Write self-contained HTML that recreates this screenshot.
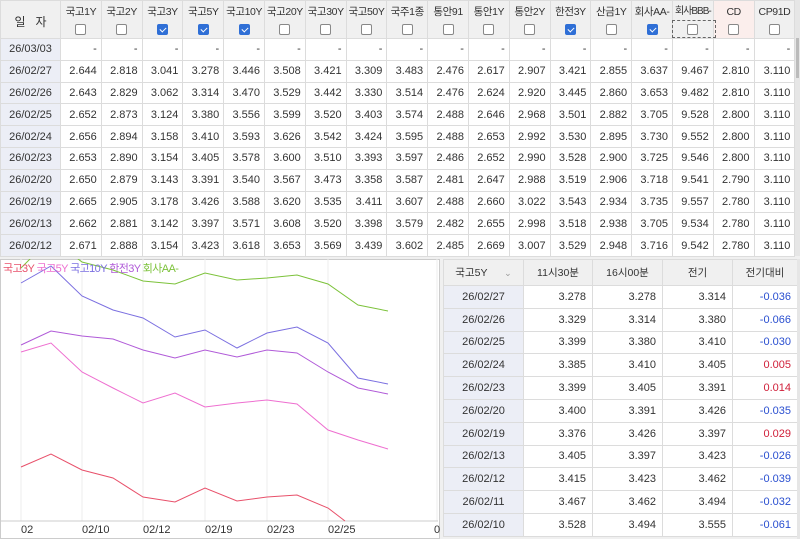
<!DOCTYPE html>
<html><head><meta charset="utf-8"><style>
*{box-sizing:border-box;margin:0;padding:0}
body{width:800px;height:539px;overflow:hidden;background:#f0f0f0;font-family:"Liberation Sans","Noto Sans CJK KR",sans-serif;font-size:11px;color:#333;position:relative}
table{border-collapse:collapse;table-layout:fixed;position:absolute}
td,th{border:1px solid #dcdcdc;overflow:hidden;white-space:nowrap;font-weight:normal}
#t1{left:0;top:0;width:795px}
#t1 th{background:#f0f0f0;height:38px;vertical-align:top;padding-top:4px;font-size:10.5px;letter-spacing:-0.4px;color:#333}
#t1 th b{display:block;font-weight:normal;white-space:nowrap;height:14px;line-height:14px}
#t1 td{height:21.8px;background:#fff;text-align:right;padding-right:4px;font-size:11px;color:#333}
#t1 td.d{background:#eceef6;text-align:center;padding:0}
.cb{display:block;margin:5px auto 0;width:11px;height:11px;border:1px solid #888;border-radius:2px;background:#fff}
.cb.on{background:#2f6fd6;border-color:#2f6fd6;position:relative}
.cb.on:after{content:"";position:absolute;left:3px;top:1px;width:3px;height:5px;border:solid #fff;border-width:0 1.5px 1.5px 0;transform:rotate(45deg)}
#t2{left:443px;top:259px;width:354px}
#t2 th{background:#f0f0f0;height:26px;font-size:10.5px}
#t2 td{height:22.8px;background:#fff;text-align:right;padding-right:6px;font-size:11px}
#t2 td.d{background:#eceef6;text-align:center;padding:0}
.b{color:#2a4fd0}.r{color:#d0203a}
#chart{position:absolute;left:0;top:259px;width:440px;height:280px;background:#fff;border:1px solid #ccc}
</style></head><body>
<table id="t1"><colgroup><col style="width:60px"><col span="18" style="width:40.8px"></colgroup>
<tr><th style="padding-top:12px;font-size:12px;letter-spacing:0">일&nbsp;&nbsp;&nbsp;자</th>
<th><b>국고1Y</b><i class="cb"></i></th><th><b>국고2Y</b><i class="cb"></i></th><th><b>국고3Y</b><i class="cb on"></i></th><th><b>국고5Y</b><i class="cb on"></i></th><th><b>국고10Y</b><i class="cb on"></i></th><th><b>국고20Y</b><i class="cb"></i></th><th><b>국고30Y</b><i class="cb"></i></th><th><b>국고50Y</b><i class="cb"></i></th><th><b>국주1종</b><i class="cb"></i></th><th><b>통안91</b><i class="cb"></i></th><th><b>통안1Y</b><i class="cb"></i></th><th><b>통안2Y</b><i class="cb"></i></th><th><b>한전3Y</b><i class="cb on"></i></th><th><b>산금1Y</b><i class="cb"></i></th><th><b>회사AA-</b><i class="cb on"></i></th><th style="padding-left:0;padding-right:0"><b style="letter-spacing:-1px;font-size:10px;overflow:visible;margin-left:-2px;margin-right:-2px">회사BBB-</b><i class="cb"></i></th><th style="background:#fbeeec"><b>CD</b><i class="cb"></i></th><th><b>CP91D</b><i class="cb"></i></th></tr>
<tr><td class="d">26/03/03</td><td>-</td><td>-</td><td>-</td><td>-</td><td>-</td><td>-</td><td>-</td><td>-</td><td>-</td><td>-</td><td>-</td><td>-</td><td>-</td><td>-</td><td>-</td><td>-</td><td>-</td><td>-</td></tr>
<tr><td class="d">26/02/27</td><td>2.644</td><td>2.818</td><td>3.041</td><td>3.278</td><td>3.446</td><td>3.508</td><td>3.421</td><td>3.309</td><td>3.483</td><td>2.476</td><td>2.617</td><td>2.907</td><td>3.421</td><td>2.855</td><td>3.637</td><td>9.467</td><td>2.810</td><td>3.110</td></tr>
<tr><td class="d">26/02/26</td><td>2.643</td><td>2.829</td><td>3.062</td><td>3.314</td><td>3.470</td><td>3.529</td><td>3.442</td><td>3.330</td><td>3.514</td><td>2.476</td><td>2.624</td><td>2.920</td><td>3.445</td><td>2.860</td><td>3.653</td><td>9.482</td><td>2.810</td><td>3.110</td></tr>
<tr><td class="d">26/02/25</td><td>2.652</td><td>2.873</td><td>3.124</td><td>3.380</td><td>3.556</td><td>3.599</td><td>3.520</td><td>3.403</td><td>3.574</td><td>2.488</td><td>2.646</td><td>2.968</td><td>3.501</td><td>2.882</td><td>3.705</td><td>9.528</td><td>2.800</td><td>3.110</td></tr>
<tr><td class="d">26/02/24</td><td>2.656</td><td>2.894</td><td>3.158</td><td>3.410</td><td>3.593</td><td>3.626</td><td>3.542</td><td>3.424</td><td>3.595</td><td>2.488</td><td>2.653</td><td>2.992</td><td>3.530</td><td>2.895</td><td>3.730</td><td>9.552</td><td>2.800</td><td>3.110</td></tr>
<tr><td class="d">26/02/23</td><td>2.653</td><td>2.890</td><td>3.154</td><td>3.405</td><td>3.578</td><td>3.600</td><td>3.510</td><td>3.393</td><td>3.597</td><td>2.486</td><td>2.652</td><td>2.990</td><td>3.528</td><td>2.900</td><td>3.725</td><td>9.546</td><td>2.800</td><td>3.110</td></tr>
<tr><td class="d">26/02/20</td><td>2.650</td><td>2.879</td><td>3.143</td><td>3.391</td><td>3.540</td><td>3.567</td><td>3.473</td><td>3.358</td><td>3.587</td><td>2.481</td><td>2.647</td><td>2.988</td><td>3.519</td><td>2.906</td><td>3.718</td><td>9.541</td><td>2.790</td><td>3.110</td></tr>
<tr><td class="d">26/02/19</td><td>2.665</td><td>2.905</td><td>3.178</td><td>3.426</td><td>3.588</td><td>3.620</td><td>3.535</td><td>3.411</td><td>3.607</td><td>2.488</td><td>2.660</td><td>3.022</td><td>3.543</td><td>2.934</td><td>3.735</td><td>9.557</td><td>2.780</td><td>3.110</td></tr>
<tr><td class="d">26/02/13</td><td>2.662</td><td>2.881</td><td>3.142</td><td>3.397</td><td>3.571</td><td>3.608</td><td>3.520</td><td>3.398</td><td>3.579</td><td>2.482</td><td>2.655</td><td>2.998</td><td>3.518</td><td>2.938</td><td>3.705</td><td>9.534</td><td>2.780</td><td>3.110</td></tr>
<tr><td class="d">26/02/12</td><td>2.671</td><td>2.888</td><td>3.154</td><td>3.423</td><td>3.618</td><td>3.653</td><td>3.569</td><td>3.439</td><td>3.602</td><td>2.485</td><td>2.669</td><td>3.007</td><td>3.529</td><td>2.948</td><td>3.716</td><td>9.542</td><td>2.780</td><td>3.110</td></tr>
</table>
<div style="position:absolute;left:672px;top:20px;width:44px;height:18px;border:1px dashed #666"></div>
<div style="position:absolute;left:795px;top:0;width:5px;height:256px;background:#e6e6e6"></div>
<div style="position:absolute;left:796px;top:38px;width:3px;height:40px;background:#bbb"></div>

<div id="chart"><svg width="440" height="280" viewBox="0 259 440 280" style="position:absolute;left:-1px;top:-1px">
<g stroke="#eee" stroke-width="1">
<line x1="21" y1="259" x2="21" y2="521"/><line x1="82" y1="259" x2="82" y2="521"/><line x1="143" y1="259" x2="143" y2="521"/><line x1="205" y1="259" x2="205" y2="521"/><line x1="267" y1="259" x2="267" y2="521"/><line x1="328" y1="259" x2="328" y2="521"/><line x1="437" y1="259" x2="437" y2="521"/></g>
<line x1="0" y1="521" x2="438" y2="521" stroke="#ccc"/>
<g fill="none" stroke-width="1">
<polyline stroke="#7cc23a" points="21,268 51,238 82,262 113,270 143,281 175,284 205,273 237,280 267,278 297,275 328,284 358,305 388,311"/>
<polyline stroke="#7b6fe0" points="21,283 51,266 82,296 113,310 143,318 175,337 205,330 237,348 267,333 297,327 328,343 358,378 388,384"/>
<polyline stroke="#b05ad8" points="21,345 51,331 82,336 113,339 143,350 175,358 205,350 237,357 267,350 297,353 328,372 358,388 388,394"/>
<polyline stroke="#ee6fd0" points="21,352 51,343 82,372 113,388 143,403 175,393 205,407 237,403 267,400 297,404 328,430 358,440 388,449"/>
<polyline stroke="#e8506a" points="21,467 51,454 82,470 113,478 143,497 175,502 205,488 237,501 267,497 297,495 328,508 345,521"/>
</g>
<g font-size="11" fill="#333" font-family="Liberation Sans, sans-serif">
<text x="21" y="533">02</text><text x="82" y="533">02/10</text><text x="143" y="533">02/12</text><text x="205" y="533">02/19</text><text x="267" y="533">02/23</text><text x="328" y="533">02/25</text><text x="434" y="533">0</text></g>
<text x="3" y="272" font-size="11" letter-spacing="-0.6" font-family="Liberation Sans, Noto Sans CJK KR, sans-serif"><tspan fill="#e8506a">국고3Y </tspan><tspan fill="#ee6fd0">국고5Y </tspan><tspan fill="#7b6fe0">국고10Y </tspan><tspan fill="#b05ad8">한전3Y </tspan><tspan fill="#7cc23a">회사AA-</tspan></text>
</svg></div>

<table id="t2"><colgroup><col style="width:80px"><col style="width:69px"><col style="width:70px"><col style="width:70px"><col style="width:65px"></colgroup>
<tr><th>국고5Y <span style="color:#999;font-size:9px;margin-left:14px">⌄</span></th><th>11시30분</th><th>16시00분</th><th>전기</th><th>전기대비</th></tr>
<tr><td class="d">26/02/27</td><td>3.278</td><td>3.278</td><td>3.314</td><td class="b">-0.036</td></tr>
<tr><td class="d">26/02/26</td><td>3.329</td><td>3.314</td><td>3.380</td><td class="b">-0.066</td></tr>
<tr><td class="d">26/02/25</td><td>3.399</td><td>3.380</td><td>3.410</td><td class="b">-0.030</td></tr>
<tr><td class="d">26/02/24</td><td>3.385</td><td>3.410</td><td>3.405</td><td class="r">0.005</td></tr>
<tr><td class="d">26/02/23</td><td>3.399</td><td>3.405</td><td>3.391</td><td class="r">0.014</td></tr>
<tr><td class="d">26/02/20</td><td>3.400</td><td>3.391</td><td>3.426</td><td class="b">-0.035</td></tr>
<tr><td class="d">26/02/19</td><td>3.376</td><td>3.426</td><td>3.397</td><td class="r">0.029</td></tr>
<tr><td class="d">26/02/13</td><td>3.405</td><td>3.397</td><td>3.423</td><td class="b">-0.026</td></tr>
<tr><td class="d">26/02/12</td><td>3.415</td><td>3.423</td><td>3.462</td><td class="b">-0.039</td></tr>
<tr><td class="d">26/02/11</td><td>3.467</td><td>3.462</td><td>3.494</td><td class="b">-0.032</td></tr>
<tr><td class="d">26/02/10</td><td>3.528</td><td>3.494</td><td>3.555</td><td class="b">-0.061</td></tr>
</table>
<div style="position:absolute;left:797px;top:259px;width:3px;height:280px;background:#e6e6e6"></div>
</body></html>
